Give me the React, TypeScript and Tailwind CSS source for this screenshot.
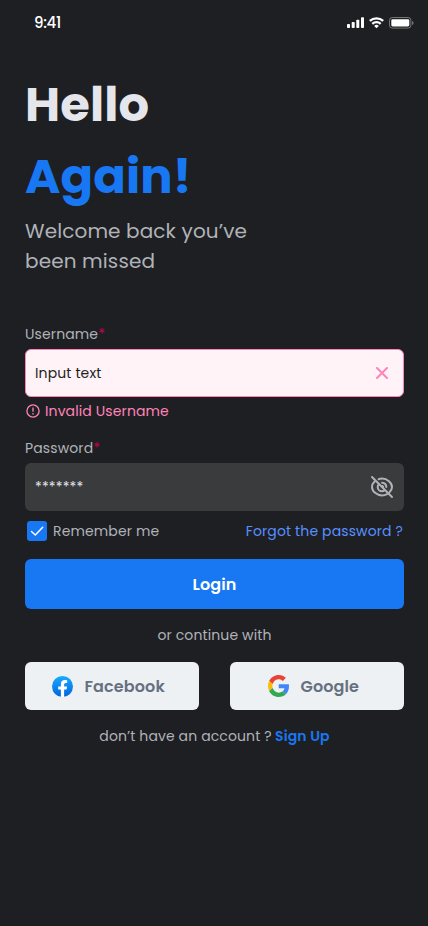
import React from "react";

function StatusIcons() {
  return (
    <svg className="h-[14px] w-[68px]" viewBox="0 0 68 14" fill="none">
      <g fill="#fff">
        <rect x="0" y="8" width="3" height="4" rx="0.8" />
        <rect x="4.7" y="6" width="3" height="6" rx="0.8" />
        <rect x="9.3" y="3.7" width="3" height="8.3" rx="0.8" />
        <rect x="14" y="1.3" width="3" height="10.7" rx="0.8" />
      </g>
      <g stroke="#fff" strokeWidth="2.2">
        <path d="M22.8 4.9A10 10 0 0 1 36.2 4.9" />
        <path d="M25.3 7.9A6.1 6.1 0 0 1 33.7 7.9" />
      </g>
      <path d="M29.5 12.3L27.2 9.9A3.4 3.4 0 0 1 31.8 9.9Z" fill="#fff" />
      <rect x="42.5" y="1.5" width="21.4" height="10.6" rx="2.8" stroke="#fff" strokeOpacity="0.38" />
      <rect x="44.3" y="3.2" width="18" height="7.3" rx="1.4" fill="#fff" />
      <path d="M65.1 5v4c.8-.3 1.4-1.1 1.4-2s-.6-1.7-1.4-2Z" fill="#fff" fillOpacity="0.42" />
    </svg>
  );
}

function CloseIcon() {
  return (
    <svg className="size-3" viewBox="0 0 12 12" fill="none" stroke="#ff84b7" strokeWidth="2" strokeLinecap="round">
      <path d="M1 1L11 11M11 1L1 11" />
    </svg>
  );
}

function AlertIcon() {
  return (
    <svg className="size-[14px]" viewBox="0 0 14 14" fill="none" stroke="#ff84b7" strokeWidth="1.3">
      <circle cx="7" cy="7" r="6.1" />
      <path d="M7 3.4V7.8M7 9V10.5" />
    </svg>
  );
}

function EyeOffIcon() {
  return (
    <svg className="size-6" viewBox="0 0 24 24" fill="none" stroke="#b0b3b8" strokeWidth="2" strokeLinecap="round">
      <path d="M8.6 4.2C9.7 3.8 10.8 3.6 12 3.6C17.2 3.6 22 7.6 22 12C22 14 21 16 19.5 17.3" />
      <path d="M4.6 6.5C3 8 2 10 2 12C2 16.4 6.8 20.4 12 20.4C13.9 20.4 15.6 19.9 17.1 19.1" />
      <path d="M8.8 9.2C8.1 10 7.7 11 7.7 12.1C7.7 14.4 9.7 16.3 12 16.3C13 16.3 13.9 15.9 14.6 15.3" />
      <path d="M12.1 7.7C14.4 7.8 16.2 9.6 16.3 11.9" />
      <path d="M12.2 11C12.8 11.2 13.1 11.6 13.2 12.2" />
      <path d="M2 2L22 22" />
    </svg>
  );
}

function FacebookIcon() {
  return (
    <svg className="size-[21px]" viewBox="0 0 24 24">
      <defs>
        <linearGradient id="fb" x1="0" y1="0" x2="0" y2="1">
          <stop offset="0" stopColor="#18acfe" />
          <stop offset="1" stopColor="#0163e0" />
        </linearGradient>
      </defs>
      <circle cx="12" cy="12" r="12" fill="url(#fb)" />
      <path
        fill="#fff"
        d="M16.67 15.47L17.2 12h-3.33V9.75c0-.95.47-1.88 1.96-1.88h1.51V4.92s-1.37-.23-2.68-.23c-2.74 0-4.53 1.66-4.53 4.67V12H7.08v3.47h3.05v8.39a12.1 12.1 0 0 0 3.74 0v-8.39h2.8z"
      />
    </svg>
  );
}

function GoogleIcon() {
  return (
    <svg className="h-[22px] w-[21px]" viewBox="0 0 47 48" preserveAspectRatio="none">
      <path fill="#EA4335" d="M24 9.5c3.54 0 6.71 1.22 9.21 3.6l6.85-6.85C35.9 2.38 30.47 0 24 0 14.62 0 6.51 5.38 2.56 13.22l7.98 6.19C12.43 13.72 17.74 9.5 24 9.5z" />
      <path fill="#4285F4" d="M46.98 24.55c0-1.57-.15-3.09-.38-4.55H24v9.02h12.94c-.58 2.96-2.26 5.48-4.78 7.18l7.73 6c4.51-4.18 7.09-10.36 7.09-17.65z" />
      <path fill="#FBBC05" d="M10.53 28.59c-.48-1.45-.76-2.99-.76-4.59s.27-3.14.76-4.59l-7.98-6.19C.92 16.46 0 20.12 0 24c0 3.88.92 7.54 2.56 10.78l7.97-6.19z" />
      <path fill="#34A853" d="M24 48c6.48 0 11.93-2.13 15.89-5.81l-7.73-6c-2.15 1.45-4.92 2.3-8.16 2.3-6.26 0-11.57-4.22-13.47-9.91l-7.98 6.19C6.51 42.62 14.62 48 24 48z" />
    </svg>
  );
}

export default function App() {
  return (
    <div className="flex h-[926px] w-[428px] flex-col overflow-hidden bg-[#1e1f23] font-['Poppins','Inter',sans-serif] text-[14px] leading-6 tracking-[0.12px] text-[#b0b3b8]">
      <header className="flex h-[46px] items-center justify-between pr-[13px] pl-[34px]">
        <span className="text-[15px] font-medium tracking-[-0.3px] text-white">9:41</span>
        <StatusIcons />
      </header>

      <main className="flex flex-col px-6 pl-[25px]">
        <h1 className="mt-[23px] text-[48px] leading-[72px] font-bold tracking-[0.12px] text-[#e4e6eb]">
          Hello
          <br />
          <span className="text-[#1877f2]">Again!</span>
        </h1>
        <p className="mt-[3px] text-[20px] leading-[30px]">
          Welcome back you’ve
          <br />
          been missed
        </p>

        <label className="mt-[46px]">
          Username<span className="text-[#c30052]">*</span>
        </label>
        <div className="mt-[3px] flex h-12 items-center justify-between rounded-md border border-[#ff84b7] bg-[#fff3f8] pr-[15px] pl-[9px] text-[#1e1f23]">
          <span>Input text</span>
          <CloseIcon />
        </div>
        <div className="mt-[2px] flex items-center gap-[5px] pl-[1px] text-[#ff84b7]">
          <AlertIcon />
          <span>Invalid Username</span>
        </div>

        <label className="mt-[13px]">
          Password<span className="text-[#c30052]">*</span>
        </label>
        <div className="mt-[3px] flex h-12 items-center justify-between rounded-md bg-[#3a3b3c] pr-[10px] pl-[10px] text-[#e4e6eb]">
          <span>*******</span>
          <EyeOffIcon />
        </div>

        <div className="mt-2 flex items-center pl-[2px]">
          <span className="flex size-5 items-center justify-center rounded-[3px] bg-[#1877f2]">
            <svg className="size-5" viewBox="0 0 20 20" fill="none" stroke="#fff" strokeWidth="1.5" strokeLinecap="round" strokeLinejoin="round">
              <path d="M4.5 10.5L8.3 14L15.7 6.3" />
            </svg>
          </span>
          <span className="ml-[6px]">Remember me</span>
          <a className="mr-[1px] ml-auto text-[#5890ff]">Forgot the password ?</a>
        </div>

        <button className="mt-4 h-[50px] rounded-md bg-[#1877f2] pt-[2px] text-[16px] font-semibold text-white">Login</button>
        <p className="mt-[14px] text-center">or continue with</p>

        <div className="mt-[15px] flex justify-between text-[16px] font-semibold text-[#667080]">
          <button className="flex h-12 w-[174px] items-center rounded-md bg-[#eef1f4] pl-[27px]">
            <FacebookIcon />
            <span className="ml-[11.5px] pt-[2px]">Facebook</span>
          </button>
          <button className="flex h-12 w-[174px] items-center rounded-md bg-[#eef1f4] pl-[38px]">
            <GoogleIcon />
            <span className="ml-[11.5px] pt-[2px]">Google</span>
          </button>
        </div>

        <p className="mt-[14px] text-center">
          don’t have an account ? <a className="-ml-[0.5px] font-semibold text-[#1877f2]">Sign Up</a>
        </p>
      </main>
    </div>
  );
}
